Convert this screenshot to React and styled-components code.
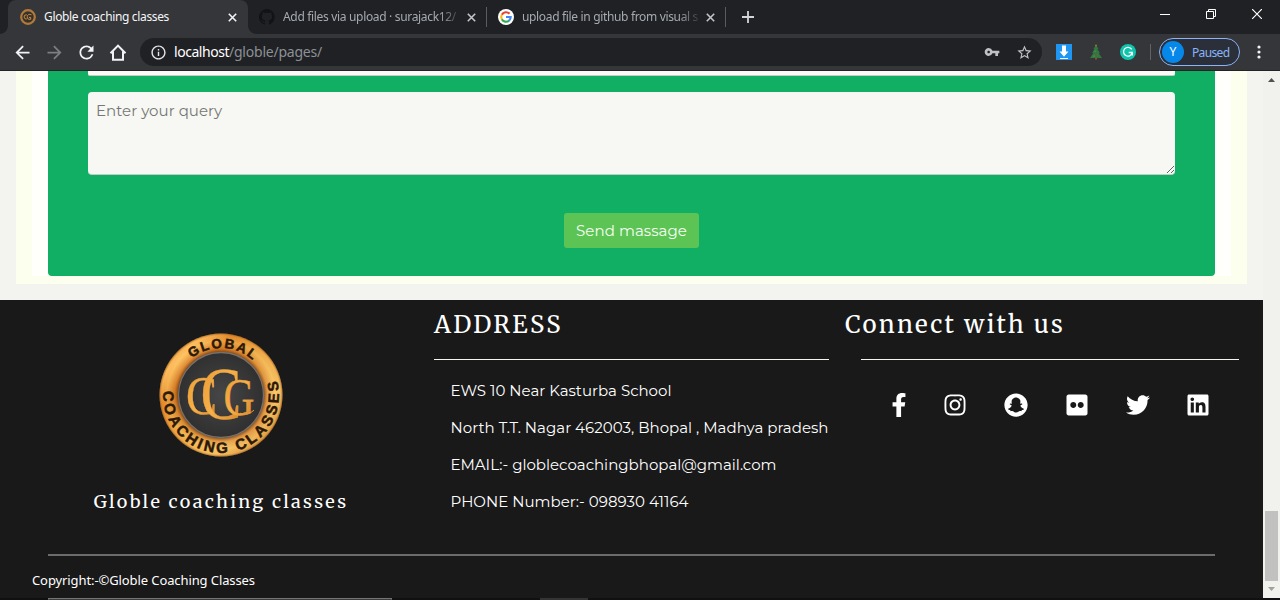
import React, { useLayoutEffect, useRef, useState } from 'react';
import styled, { createGlobalStyle } from 'styled-components';
import { MdArrowBack, MdArrowForward, MdRefresh, MdInfoOutline, MdVpnKey, MdStarBorder } from 'react-icons/md';
import { FaFacebookF, FaInstagram, FaSnapchat, FaFlickr, FaTwitter, FaLinkedin } from 'react-icons/fa';

const GlobalStyle = createGlobalStyle`
  * { box-sizing: border-box; }
  body { margin: 0; overflow: hidden; background: #1a1a1a; }
`;

const ui = '"Noto Sans", "Open Sans", sans-serif';
const body = 'Montserrat, Inter, sans-serif';
const serif = 'Merriweather, "DejaVu Serif", serif';

const Window = styled.div`
  width: 1280px;
  height: 600px;
  display: flex;
  flex-direction: column;
  overflow: hidden;
  font-family: ${ui};
`;

/* Text tracked so that it fills a given measure */
const Tracked = styled.span`
  display: inline-block;
  white-space: nowrap;
`;
function Fit({ width, children }) {
  const ref = useRef(null);
  const [spacing, setSpacing] = useState(0);
  useLayoutEffect(() => {
    const el = ref.current;
    el.style.letterSpacing = '0px';
    const natural = el.getBoundingClientRect().width;
    const next = (width - natural) / children.length;
    el.style.letterSpacing = next + 'px';
    setSpacing(next);
  }, [width, children]);
  return <Tracked ref={ref} style={{ letterSpacing: spacing + 'px' }}>{children}</Tracked>;
}

const TabStrip = styled.div`
  height: 34px;
  flex: none;
  display: flex;
  background: #202124;
  padding-left: 8px;
`;
const Tab = styled.div`
  position: relative;
  width: ${p => p.$width}px;
  height: 34px;
  display: flex;
  align-items: center;
  padding: 0 10px 0 ${p => p.$left}px;
  font-size: 12px;
  color: ${p => (p.$active ? '#f4f5f6' : '#a5aab0')};
  background: ${p => (p.$active ? '#35363a' : 'transparent')};
  border-radius: 8px 8px 0 0;
  ${p => p.$active && `
    &::before, &::after {
      content: '';
      position: absolute;
      bottom: 0;
      width: 8px;
      height: 8px;
    }
    &::before { left: -8px; background: radial-gradient(circle at 0 0, #202124 7.5px, #35363a 8.2px); }
    &::after { right: -8px; background: radial-gradient(circle at 8px 0, #202124 7.5px, #35363a 8.2px); }
  `}
`;
const TabTitle = styled.div`
  width: 176px;
  margin-left: 8px;
  overflow: hidden;
  white-space: nowrap;
  line-height: 20px;
  ${p => p.$fade && 'mask-image: linear-gradient(to right, #000 157px, transparent 180px);'}
`;
const TabClose = styled.svg`
  width: 9px;
  height: 9px;
  flex: none;
  margin-left: ${p => p.$gap}px;
`;
const Divider = styled.div`
  width: 1px;
  height: 20px;
  margin-top: 7px;
  background: #5a5c60;
`;
const NewTab = styled.svg`
  width: 12px;
  height: 12px;
  margin: 11px 0 0 16px;
`;
const WindowButtons = styled.div`
  margin-left: auto;
  display: flex;
  gap: 36px;
  padding: 9px 18px 0 0;
  svg { width: 10px; height: 10px; display: block; }
`;

const Toolbar = styled.div`
  height: 37px;
  flex: none;
  display: flex;
  align-items: center;
  background: #35363a;
  border-bottom: 1px solid #232226;
  padding: 0 17px 0 11.5px;
`;
const Nav = styled.div`
  width: 128.5px;
  display: flex;
  gap: 11px;
  color: #f1f3f4;
  svg { width: 21px; height: 21px; display: block; }
  svg:nth-child(2) { color: #7c7e81; }
`;
const AddressBar = styled.div`
  width: 902px;
  height: 28px;
  border-radius: 14px;
  background: #202124;
  display: flex;
  align-items: center;
  padding: 0 9.5px 0 9.5px;
  font-size: 14px;
  color: #fff;
`;
const Url = styled.div`
  flex: 1;
  margin-left: 7.5px;
  line-height: 20px;
  white-space: nowrap;
`;
const Path = styled.span`
  color: #8c9196;
`;
const BarIcons = styled.div`
  display: flex;
  align-items: center;
  gap: 15.5px;
  color: #bfc1c4;
`;
const Extensions = styled.div`
  display: flex;
  gap: 16px;
  margin-left: 14px;
  svg { width: 16px; height: 16px; display: block; }
`;
const BarDivider = styled.div`
  width: 1px;
  height: 16px;
  margin: 0 8px 0 14px;
  background: #616368;
`;
const Profile = styled.div`
  width: 81px;
  height: 28px;
  border: 1px solid #8ab4f8;
  border-radius: 14px;
  background: #2b2f39;
  color: #8ab4f8;
  display: flex;
  align-items: center;
  gap: 8px;
  padding-left: 2px;
  font-size: 12px;
`;
const Avatar = styled.div`
  width: 22px;
  height: 22px;
  border-radius: 50%;
  background: #0588ea;
  color: #fff;
  font-size: 12px;
  line-height: 22px;
  text-align: center;
`;
const MenuDots = styled.svg`
  width: 4px;
  height: 14px;
  margin-left: 16.5px;
`;

const Viewport = styled.div`
  height: 527px;
  flex: none;
  display: flex;
`;
const Page = styled.div`
  width: 1263px;
  font-family: ${body};
`;
const Section = styled.div`
  height: 229px;
  background: #f3f3ef;
  padding: 0 16px 16px;
`;
const Cream = styled.div`
  height: 213px;
  background: #fcffee;
  padding: 0 16px 8px;
`;
const White = styled.div`
  height: 205px;
  background: #fffffc;
  padding: 0 16px;
`;
const Form = styled.div`
  height: 205px;
  background: #10af63;
  border-radius: 0 0 4px 4px;
  padding: 0 40px;
  display: flex;
  flex-direction: column;
`;
const InputEnd = styled.div`
  height: 5px;
  background: #fbfaf6;
  border-bottom: 1px solid #c4ccc3;
  border-radius: 0 0 2px 2px;
`;
const Query = styled.textarea`
  display: block;
  width: 1087px;
  height: 83px;
  margin: 16px 0 38px;
  padding: 8px;
  border: 0;
  border-bottom: 1px solid #c4ccc3;
  border-radius: 4px;
  background: #f7f8f4;
  font: 15px/22px ${body};
  letter-spacing: 0.03px;
  resize: vertical;
  outline: none;
  &::placeholder { color: #767773; opacity: 1; }
`;
const Send = styled.button`
  align-self: center;
  width: 135px;
  height: 35px;
  padding: 0;
  border: 0;
  border-radius: 3px;
  background: #5cc454;
  color: #f7fff4;
  font: 15px/35px ${body};
`;

const Footer = styled.footer`
  height: 298px;
  background: #191919;
  color: #fff;
`;
const Columns = styled.div`
  height: 254px;
  display: grid;
  grid-template-columns: 434px 395px 434px;
`;
const Brand = styled.div`
  padding: 33px 0 0 8px;
  display: flex;
  flex-direction: column;
  align-items: center;
`;
const LogoSvg = styled.svg`
  width: 124px;
  height: 124px;
  flex: none;
`;
const BrandName = styled.div`
  margin-top: 29px;
  font: 18px/32px ${serif};
`;
const Column = styled.div`
  padding: 0 ${p => p.$right || 0}px 0 ${p => p.$left || 0}px;
`;
const Heading = styled.h2`
  height: 59px;
  margin: 0;
  font: 400 24px/50px ${serif};
`;
const Rule = styled.div`
  height: 1px;
  margin-left: ${p => p.$left || 0}px;
  background: #f5f6f0;
`;
const Lines = styled.div`
  padding: 19px 0 0 16.5px;
  display: flex;
  flex-direction: column;
  gap: 13px;
  font-size: 15px;
  line-height: 24px;
`;
const Social = styled.div`
  display: flex;
  gap: 38.4px;
  padding: 33px 0 0 46px;
`;
const SocialLink = styled.a`
  width: ${p => p.$width}px;
  display: flex;
  justify-content: center;
  svg { width: 24px; height: 24px; display: block; flex: none; }
`;
const BottomRule = styled.div`
  height: 2px;
  margin: 0 48px;
  background: #6b6b6b;
`;
const Copyright = styled.div`
  padding: 14px 0 0 32px;
  font: 13px/20px ${ui};
`;

const Scrollbar = styled.div`
  width: 17px;
  background: #f1f1ed;
  display: flex;
  flex-direction: column;
  align-items: center;
  padding: 7px 0;
`;
const ScrollArrow = styled.svg`
  width: 7px;
  height: 4px;
`;
const Thumb = styled.div`
  width: 13px;
  height: 70px;
  margin: 429px 0 auto;
  background: #c1c1bf;
`;
const TaskbarEdge = styled.div`
  height: 2px;
  display: flex;
  background: #101010;
  padding-left: 48px;
`;
const SearchEdge = styled.div`
  width: 344px;
  border: 1px solid #747474;
  border-bottom-color: #3c3c3c;
`;
const TaskEdge = styled.div`
  width: 48px;
  margin-left: 148px;
  background: #343434;
`;

const Close = ({ color, gap }) => (
  <TabClose $gap={gap} viewBox="0 0 9 9"><path d="M.8.8l7.4 7.4M8.2.8L.8 8.2" stroke={color} strokeWidth="1.6" /></TabClose>
);

const socials = [
  [FaFacebookF, 15],
  [FaInstagram, 21],
  [FaSnapchat, 24],
  [FaFlickr, 21],
  [FaTwitter, 24],
  [FaLinkedin, 21],
];

function Logo() {
  return (
    <LogoSvg viewBox="0 0 124 124">
      <defs>
        <linearGradient id="ring" x1="0" y1="0" x2="1" y2="1">
          <stop offset="0" stopColor="#e07c1e" />
          <stop offset=".18" stopColor="#ffc060" />
          <stop offset=".3" stopColor="#e08a2b" />
          <stop offset=".5" stopColor="#eeac4a" />
          <stop offset=".72" stopColor="#f8c468" />
          <stop offset="1" stopColor="#cc7a22" />
        </linearGradient>
        <radialGradient id="ringShade">
          <stop offset=".68" stopColor="#40200a" stopOpacity=".85" />
          <stop offset=".76" stopColor="#b8500e" stopOpacity=".3" />
          <stop offset=".88" stopColor="#ffd878" stopOpacity=".25" />
          <stop offset=".96" stopColor="#f09030" stopOpacity=".05" />
          <stop offset="1" stopColor="#6c3c12" stopOpacity=".6" />
        </radialGradient>
        <radialGradient id="core"><stop offset="0" stopColor="#464646" /><stop offset="1" stopColor="#303030" /></radialGradient>
        <linearGradient id="gold" x1="0" y1="0" x2="1" y2="1">
          <stop offset="0" stopColor="#e99a30" /><stop offset=".5" stopColor="#f6b04b" /><stop offset="1" stopColor="#cf7f22" />
        </linearGradient>
        <path id="arcTop" d="M15 62a47 47 0 0 1 94 0" />
        <path id="arcBottom" d="M4.3 57a58 58 0 0 0 57.7 63a58 58 0 0 0 55.4-75" />
      </defs>
      <circle cx="62" cy="62" r="61.5" fill="url(#ring)" />
      <circle cx="62" cy="62" r="61.5" fill="url(#ringShade)" />
      <circle cx="62" cy="62" r="42.5" fill="url(#core)" stroke="#77716c" strokeWidth="1.3" />
      <g fontFamily="Liberation Sans Narrow, Liberation Sans, sans-serif" fontWeight="700" fill="#2b1807" stroke="#2b1807" strokeWidth=".5">
        <text fontSize="13.5"><textPath href="#arcTop" startOffset="42" textLength="66">GLOBAL</textPath></text>
        <text fontSize="15"><textPath href="#arcBottom" startOffset="1" textLength="200">COACHING CLASSES</textPath></text>
      </g>
      <g fontFamily="Liberation Serif, serif" fill="url(#gold)" stroke="#eda23c" strokeWidth=".4">
        <text x="27" y="80.5" fontSize="55" textLength="31" lengthAdjust="spacingAndGlyphs">C</text>
        <text x="41.5" y="86" fontSize="74" textLength="41" lengthAdjust="spacingAndGlyphs">C</text>
        <text x="64.5" y="81.5" fontSize="52" textLength="31" lengthAdjust="spacingAndGlyphs">G</text>
        <path d="M81 80.2q8 2.6 14-3" fill="none" stroke="#e69a37" strokeWidth="1" />
      </g>
    </LogoSvg>
  );
}

const BrandFavicon = () => (
  <svg width="16" height="16" viewBox="0 0 16 16">
    <circle cx="8" cy="8" r="6.8" fill="#37322b" stroke="#b27a39" strokeWidth="2.2" />
    <path d="M6.8 5.8q-3-.2-2.7 2.2t2.7 2M11.5 5.8q-3.8-1.4-4.2 1.8t3.4 2.7V8.4H9" fill="none" stroke="#c58b42" strokeWidth="1" />
  </svg>
);
const GithubFavicon = () => (
  <svg width="16" height="16" viewBox="0 0 16 16" fill="#121316">
    <path d="M8 0a8 8 0 0 0-2.53 15.59c.4.07.55-.17.55-.38v-1.49C3.8 14.2 3.33 12.65 3.33 12.65c-.36-.92-.89-1.17-.89-1.17-.73-.5.05-.49.05-.49.8.06 1.23.83 1.23.83.71 1.23 1.87.87 2.33.66.07-.51.28-.87.5-1.07-1.77-.2-3.64-.89-3.64-3.95 0-.87.31-1.59.82-2.15-.08-.2-.36-1.02.08-2.12 0 0 .67-.22 2.2.82a7.6 7.6 0 0 1 4 0c1.53-1.04 2.2-.82 2.2-.82.44 1.1.16 1.92.08 2.12.51.56.82 1.27.82 2.15 0 3.07-1.87 3.75-3.65 3.95.29.25.54.73.54 1.48v2.19c0 .21.15.46.55.38A8 8 0 0 0 8 0z" />
  </svg>
);
const GoogleFavicon = () => (
  <svg width="16" height="16" viewBox="0 0 16 16">
    <circle cx="8" cy="8" r="8" fill="#fff" />
    <g fill="none" strokeWidth="2.1">
      <path d="M11.5 4.7A4.8 4.8 0 0 0 3.8 5.8" stroke="#ea4335" />
      <path d="M3.8 5.7a4.8 4.8 0 0 0 0 4.6" stroke="#fbbc05" />
      <path d="M3.8 10.2a4.8 4.8 0 0 0 7.3 1.4" stroke="#34a853" />
      <path d="M11.1 11.6A4.8 4.8 0 0 0 12.7 8H8" stroke="#4285f4" />
    </g>
  </svg>
);

export default function App() {
  return (
    <Window>
      <GlobalStyle />
      <TabStrip>
        <Tab $active $width={240} $left={12}>
          <BrandFavicon /><TabTitle><Fit width={125}>Globle coaching classes</Fit></TabTitle><Close gap={7.5} color="#f1f3f4" />
        </Tab>
        <Tab $width={238} $left={11}>
          <GithubFavicon /><TabTitle $fade><Fit width={173}>Add files via upload · surajack12/</Fit></TabTitle><Close gap={7.5} color="#c2c5c9" />
        </Tab>
        <Divider />
        <Tab $width={238} $left={11}>
          <GoogleFavicon /><TabTitle $fade><Fit width={176}>upload file in github from visual s</Fit></TabTitle><Close gap={7.5} color="#c2c5c9" />
        </Tab>
        <Divider />
        <NewTab viewBox="0 0 12 12"><path d="M6 0v12M0 6h12" stroke="#d2d5d8" strokeWidth="1.8" /></NewTab>
        <WindowButtons>
          <svg viewBox="0 0 10 10"><path d="M0 5.5h10" stroke="#fff" /></svg>
          <svg viewBox="0 0 10 10"><path d="M.5 2.5h7v7h-7zM2.5 2.5v-2h7v7h-2" fill="none" stroke="#fff" /></svg>
          <svg viewBox="0 0 10 10"><path d="M0 0l10 10M10 0L0 10" stroke="#fff" strokeWidth="1.2" /></svg>
        </WindowButtons>
      </TabStrip>
      <Toolbar>
        <Nav>
          <MdArrowBack /><MdArrowForward /><MdRefresh />
          <svg viewBox="0 0 21 21"><path d="M2.5 11.2L10 3.6l7.5 7.6M5 9.5v8.3h10V9.5" fill="none" stroke="currentColor" strokeWidth="2" /></svg>
        </Nav>
        <AddressBar>
          <MdInfoOutline size={17} color="#e4e6e8" />
          <Url><Fit width={55}>localhost</Fit><Path><Fit width={93}>/globle/pages/</Fit></Path></Url>
          <BarIcons><MdVpnKey size={16} /><MdStarBorder size={17} /></BarIcons>
        </AddressBar>
        <Extensions>
          <svg viewBox="0 0 16 16"><path fill="#1e96f2" d="M0 0h16v16H0z" /><path fill="#fff" d="M6 1.5h4v6h2.5L8 12.7 3.5 7.5H6zM4 14h8v1H4z" /></svg>
          <svg viewBox="0 0 16 16"><path d="M8 1l2.5 4-1 .2L12 9l-1.2.2L14 14H2l3.2-4.8L4 9l2.5-3.8-1-.2z" fill="#327742" /><path d="M7 14h2v1.5H7z" fill="#9b4b28" /><circle cx="8" cy="1.6" r="1" fill="#9a7730" /><circle cx="7" cy="7" r=".6" fill="#77b255" /><circle cx="9.5" cy="11" r=".7" fill="#aa4a38" /><circle cx="6" cy="12" r=".6" fill="#a9a93c" /></svg>
          <svg viewBox="0 0 16 16"><circle cx="8" cy="8" r="8" fill="#0fc4ac" /><path d="M11.7 5.4a4.4 4.4 0 1 0 .5 3.5M8.7 8.5h3.6v3" fill="none" stroke="#fff" strokeWidth="1.3" /></svg>
        </Extensions>
        <BarDivider />
        <Profile><Avatar>Y</Avatar><Fit width={37.5}>Paused</Fit></Profile>
        <MenuDots viewBox="0 0 4 14" fill="#f1f3f4"><circle cx="2" cy="2" r="1.6" /><circle cx="2" cy="7" r="1.6" /><circle cx="2" cy="12" r="1.6" /></MenuDots>
      </Toolbar>
      <Viewport>
        <Page>
          <Section><Cream><White>
            <Form>
              <InputEnd />
              <Query placeholder="Enter your query" />
              <Send><Fit width={111}>Send massage</Fit></Send>
            </Form>
          </White></Cream></Section>
          <Footer>
            <Columns>
              <Brand>
                <Logo />
                <BrandName><Fit width={254.5}>Globle coaching classes</Fit></BrandName>
              </Brand>
              <Column>
                <Heading><Fit width={129}>ADDRESS</Fit></Heading>
                <Rule />
                <Lines>
                  <div><Fit width={221}>EWS 10 Near Kasturba School</Fit></div>
                  <div><Fit width={378}>North T.T. Nagar 462003, Bhopal , Madhya pradesh</Fit></div>
                  <div><Fit width={326}>EMAIL:- globlecoachingbhopal@gmail.com</Fit></div>
                  <div><Fit width={238}>PHONE Number:- 098930 41164</Fit></div>
                </Lines>
              </Column>
              <Column $left={16} $right={24}>
                <Heading><Fit width={220}>Connect with us</Fit></Heading>
                <Rule $left={16} />
                <Social>
                  {socials.map(([Icon, width], i) => <SocialLink key={i} $width={width}><Icon /></SocialLink>)}
                </Social>
              </Column>
            </Columns>
            <BottomRule />
            <Copyright><Fit width={223}>Copyright:-©Globle Coaching Classes</Fit></Copyright>
          </Footer>
        </Page>
        <Scrollbar>
          <ScrollArrow viewBox="0 0 7 4"><path d="M0 4L3.5 0 7 4z" fill="#50504e" /></ScrollArrow>
          <Thumb />
          <ScrollArrow viewBox="0 0 7 4"><path d="M0 0l3.5 4L7 0z" fill="#a0a09d" /></ScrollArrow>
        </Scrollbar>
      </Viewport>
      <TaskbarEdge><SearchEdge /><TaskEdge /></TaskbarEdge>
    </Window>
  );
}
